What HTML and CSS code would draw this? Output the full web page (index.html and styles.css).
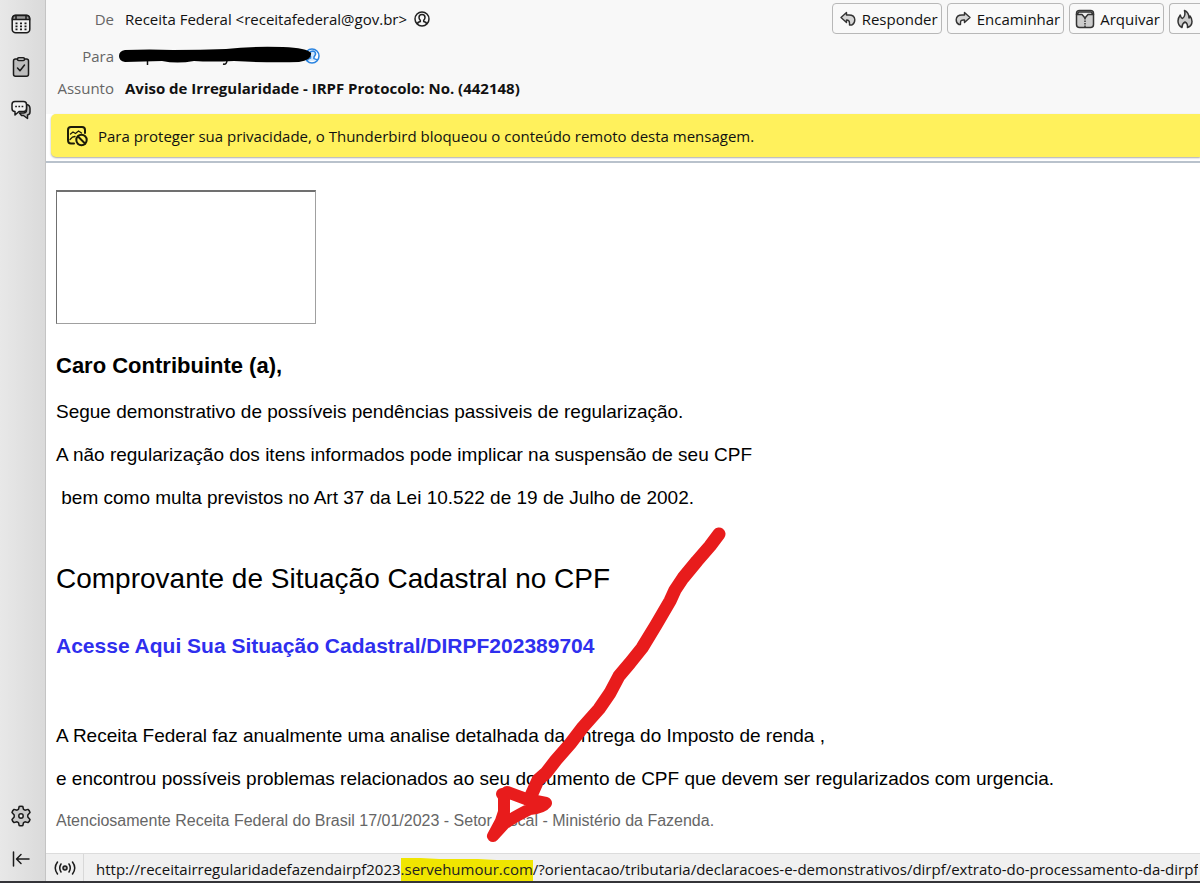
FILE: index.html
```html
<!DOCTYPE html>
<html lang="pt-BR">
<head>
<meta charset="utf-8">
<meta name="viewport" content="width=device-width, initial-scale=1">
<title>Aviso de Irregularidade - IRPF</title>
<link rel="stylesheet" href="styles.css">
</head>
<body>
<div class="app">
  <nav class="rail" aria-label="Espaços">
    <div class="rail-group">
      <button class="rail-button" type="button" aria-label="Agenda">
        <svg width="20" height="20" viewBox="0 0 20 20" fill="none" stroke="#1b1b1b" stroke-width="1.5"><rect x="1.2" y="1.2" width="17.600" height="17.600" rx="3.500" fill="#f0f0f0"/><path d="M1.500 4.500Q1.500 1.500 4.500 1.500H15.500Q18.500 1.500 18.500 4.500V5.500H1.500Z" fill="#999"/><path d="M5 1V6M15 1V6"/><path d="M4.500 9.300h11M4.500 12.300h11M4.500 15.300h11" stroke-dasharray="2 2.500" stroke-width="1.700"/></svg>
      </button>
      <button class="rail-button" type="button" aria-label="Tarefas">
        <svg width="20" height="20" viewBox="0 0 20 20" fill="none" stroke="#1b1b1b" stroke-width="1.5" stroke-linecap="round" stroke-linejoin="round"><rect x="2.500" y="2" width="15" height="17.200" rx="2" fill="#bdbdbd"/><rect x="6.500" y="0.800" width="7" height="2.700" rx="1.200" fill="#eee"/><path d="M6.500 11l2.500 2.800L13.500 8"/></svg>
      </button>
      <button class="rail-button" type="button" aria-label="Bate-papo">
        <svg width="20" height="20" viewBox="0 0 20 20" fill="none" stroke="#1b1b1b" stroke-width="1.5" stroke-linejoin="round"><path d="M15.500 4.500Q19 5 19 8.500V12Q19 14.500 16.500 15V18.500L12.500 15.500H10.500L8.500 13H12.500Q15.500 13 15.500 10Z" fill="#bbb"/><path d="M4 1.500H12.500Q15.500 1.500 15.500 4.500V8.500Q15.500 11.500 12.500 11.500H8L4 15V11.500Q1 11.500 1 8.500V4.500Q1 1.500 4 1.500Z" fill="#f1f1f1"/><path d="M4.200 6.600h8.500" stroke-dasharray="1.700 1.500"/></svg>
      </button>
    </div>
    <div class="rail-group">
      <button class="rail-button" type="button" aria-label="Configurações">
        <svg width="22" height="22" viewBox="0 0 22 22" fill="#c9c9c9" stroke="#1b1b1b" stroke-width="1.5" stroke-linejoin="round"><path d="M9.200 1.500Q11 .8 12.800 1.500L13.500 4.300L15 5.200L18 4.400Q19.600 5.700 20 7.500L17.800 10V12L20 14.500Q19.600 16.300 18 17.600L15 16.800L13.500 17.700L12.800 20.500Q11 21.200 9.200 20.500L8.500 17.700L7 16.800L4 17.600Q2.400 16.300 2 14.500L4.200 12V10L2 7.500Q2.400 5.700 4 4.400L7 5.200L8.500 4.300Z"/><circle cx="11" cy="11" r="2.200" fill="#eee"/></svg>
      </button>
      <button class="rail-button" type="button" aria-label="Recolher">
        <svg width="18" height="18" viewBox="0 0 18 18" fill="none" stroke="#1b1b1b" stroke-width="1.500" stroke-linecap="round" stroke-linejoin="round"><path d="M1.500 2V16M17 9H5M9 4.500L4.500 9L9 13.500"/></svg>
      </button>
    </div>
  </nav>

  <main class="pane">
    <header class="head">
      <dl class="fields">
        <dt>De</dt>
        <dd>Receita Federal &lt;receitafederal@gov.br&gt;
          <svg class="person" width="16" height="16" viewBox="0 0 16 16" fill="none" stroke="#222" stroke-width="1.500"><circle cx="8" cy="8" r="7"/><path d="M3.500 13Q3.500 11 6.300 10.500V9.300Q5 8 5 6.500Q5 3.500 8 3.500T11 6.500Q11 8 9.700 9.300V10.500Q12.500 11 12.500 13"/></svg>
        </dd>
        <dt>Para</dt>
        <dd>
          <svg class="redacted" width="204" height="22" viewBox="0 0 204 22" aria-label="Destinatário oculto"><g fill="#fff" stroke="#2b84e0" stroke-width="1.500"><circle cx="193" cy="11" r="7"/><path d="M188 16Q189 13.500 191.500 13V11.500Q190 10 190.500 8Q191.500 6 194 6Q197 6.500 196.500 9.500L195 12V13.500Q197.500 14 198 15.500" fill="#cfe6fb"/></g><path d="M28.500 15v5M104 19q4 1 4-4" fill="none" stroke="#111" stroke-width="1.500"/><path d="M6 5Q31 4 54 5Q82 5 107 4Q132 1 164 2Q188 3 192 8Q193 15 180 17Q152 18 115 16Q92 17 75 16Q58 19 43 16L6 17Q0 16 0 11T6 5Z"/></svg>
        </dd>
        <dt>Assunto</dt>
        <dd class="subject">Aviso de Irregularidade - IRPF Protocolo: No. (442148)</dd>
      </dl>
      <div class="toolbar">
        <button class="tool" type="button"><svg width="16" height="16" viewBox="0 0 16 16" fill="#d5d5d5" stroke="#333" stroke-width="1.400" stroke-linejoin="round"><path d="M6.500 1.500L1 6.500L6.500 11.500V9Q9.500 9 9.500 12V14H12Q15 12 14.800 8.500Q14.500 4 9 4H6.500Z"/></svg>Responder</button>
        <button class="tool" type="button"><svg width="16" height="16" viewBox="0 0 16 16" fill="#d5d5d5" stroke="#333" stroke-width="1.400" stroke-linejoin="round"><path d="M9.500 1.500L15 6.500L9.500 11.500V9Q5.500 8.500 5.500 11.500V13.500H4Q1 12 1.200 8.500Q1.500 4 7 4H9.500Z"/></svg>Encaminhar</button>
        <button class="tool tool-archive" type="button"><svg width="20" height="20" viewBox="0 0 20 20" fill="#ccc" stroke="#333" stroke-width="1.500" stroke-linejoin="round"><rect x="1.500" y="1.500" width="17" height="17" rx="3"/><path d="M1.500 5.500L4 3H16L18.500 5.500H13L10 9L7 5.500Z" fill="#eee"/><path d="M10 9V18" stroke-dasharray="1.500 1"/></svg>Arquivar</button>
        <button class="tool tool-cut" type="button" aria-label="Spam"><svg width="16" height="20" viewBox="0 0 16 20" fill="#ccc" stroke="#333" stroke-width="1.500" stroke-linejoin="round"><path d="M5 18.500Q1 16.500 1 12Q1 9 3.300 6Q3.800 9 5.500 9.500Q9 7 7.500 1.500Q12 3.500 12 9Q13 8.500 13 7Q15 9.500 15 12.500Q15 17 10.500 18.500Q11 14.500 8 13Q5 14.500 5 18.500Z"/></svg></button>
      </div>
    </header>

    <div class="notice" role="status">
      <svg width="22" height="22" viewBox="0 0 22 22" fill="none" stroke="#1c1b08" stroke-width="2" stroke-linecap="round"><path d="M19 8V5Q19 2 16 2H5Q2 2 2 5V15Q2 18.500 5 18.500H8"/><path d="M4.500 9L7 7L9.500 8.500L12.500 6L15.500 8M4 14.500L6.500 12L9 11.500" stroke-width="1.300"/><circle cx="15.500" cy="15" r="5.200"/><path d="M12 11.500L19 18.500"/></svg>
      <span>Para proteger sua privacidade, o Thunderbird bloqueou o conteúdo remoto desta mensagem.</span>
    </div>

    <article class="message">
      <div class="blocked-image"></div>
      <h2 class="greeting">Caro Contribuinte (a),</h2>
      <p>Segue demonstrativo de possíveis pendências passiveis de regularização.</p>
      <p>A não regularização dos itens informados pode implicar na suspensão de seu CPF</p>
      <p>&nbsp;bem como multa previstos no Art 37 da Lei 10.522 de 19 de Julho de 2002.</p>
      <h1 class="title">Comprovante de Situação Cadastral no CPF</h1>
      <a class="access" href="#">Acesse Aqui Sua Situação Cadastral/DIRPF202389704</a>
      <p>A Receita Federal faz anualmente uma analise detalhada da entrega do Imposto de renda ,</p>
      <p>e encontrou possíveis problemas relacionados ao seu documento de CPF que devem ser regularizados com urgencia.</p>
      <p class="signature">Atenciosamente Receita Federal do Brasil 17/01/2023 - Setor Fiscal - Ministério da Fazenda.</p>
      <svg class="arrow" width="250" height="325" viewBox="480 520 250 325" fill="none" stroke="#e81c1c" stroke-width="12" stroke-linecap="round" stroke-linejoin="round" aria-hidden="true"><path d="M719 534L710 546L697 561L683 578L675 590L670 601L656 625L642 648L630 663L619 676L610 693L599 709L583 727L570 744L556 760L546 773L538 780L530 798" stroke-width="13"/><path d="M507 792L526 799L546 803Q542 808 530 809Q512 818 504 824L493 836L501 821L504 812V796L502 794"/></svg>
    </article>

    <footer class="status">
      <span class="signal"><svg width="22" height="16" viewBox="0 0 22 16" fill="none" stroke="#1b1b1b" stroke-width="1.500" stroke-linecap="round"><circle cx="11" cy="8" r="2" fill="#aaa"/><path d="M7 4Q4.500 8 7 12M15 4Q17.500 8 15 12M3.500 2Q-1 8 3.500 14M18.500 2Q23 8 18.500 14"/></svg></span>
      <span class="url">http://receitairregularidadefazendairpf2023<mark>.servehumour.com</mark>/?orientacao/tributaria/declaracoes-e-demonstrativos/dirpf/extrato-do-processamento-da-dirpf</span>
    </footer>
  </main>
</div>
</body>
</html>
```
FILE: styles.css
```css
* { box-sizing: border-box; }

body {
  margin: 0;
  background: #fff;
  color: #111;
  font: 15px/20px "Open Sans", "Noto Sans", sans-serif;
  overflow-x: hidden;
}

button { font: inherit; color: inherit; }

.app {
  display: grid;
  grid-template-columns: 46px minmax(0, 1fr);
  min-height: calc(100vh - 3px);
  border-bottom: 2px solid #343438;
}

.rail {
  display: flex;
  flex-direction: column;
  justify-content: space-between;
  padding: 2px 4px 1px 0;
  border-right: 1px solid #c4c4c4;
  background: linear-gradient(90deg, #e8e8e8, #dadada);
}

.rail-group { display: flex; flex-direction: column; }

.rail-button {
  display: grid;
  place-items: center;
  height: 43px;
  padding: 0;
  border: 0;
  background: none;
}

.pane { display: flex; flex-direction: column; min-width: 0; }

.head {
  display: flex;
  justify-content: space-between;
  align-items: flex-start;
  height: 114px;
  padding-top: 3px;
  background: #f8f8f8;
}

.fields {
  display: grid;
  grid-template-columns: 68px auto;
  grid-template-rows: 32px 42px 22px;
  column-gap: 11px;
  align-items: center;
  margin: 0;
}

.fields dt { color: #666; text-align: right; }
.fields dd { display: flex; align-items: center; gap: 7px; margin: 0; white-space: nowrap; }
.subject { font-weight: 700; }
.redacted { margin-left: -6px; }

.toolbar { display: flex; gap: 5px; }

.tool {
  display: flex;
  align-items: center;
  gap: 6px;
  height: 31px;
  padding: 0 3px 0 7px;
  border: 1px solid #b8b8b8;
  border-radius: 4px;
  background: #f9f9f9;
  white-space: nowrap;
}

.tool-archive { padding-left: 5px; gap: 5px; }

.tool-cut {
  padding: 0 7px;
  border-right: 0;
  border-radius: 4px 0 0 4px;
}

.notice {
  display: flex;
  align-items: center;
  gap: 10px;
  height: 43px;
  margin-left: 5px;
  padding-left: 15px;
  border-radius: 5px 0 0 5px;
  background: #fff15c;
  box-shadow: 0 1px 2px #aaa;
}

.message {
  position: relative;
  flex: 1;
  margin-top: 4px;
  padding: 27px 10px 20px;
  border-top: 2px solid #b9c2cc;
  background: #fff;
  color: #000;
  font: 19px/24px "Liberation Sans", Arial, sans-serif;
}

.message p { margin: 0 0 19px; }

.blocked-image {
  width: 260px;
  height: 134px;
  border: 1px solid #a0a0a0;
  border-top: 2px solid #707070;
  border-left-color: #707070;
}

.greeting { margin: 28px 0 20px; font-size: 22px; line-height: 28px; }
.title { margin: 53px 0 37px; font-size: 28px; font-weight: 400; line-height: 32px; }

.access {
  display: block;
  margin-bottom: 64px;
  color: #2f2fee;
  font-size: 21px;
  font-weight: 700;
  line-height: 28px;
  text-decoration: none;
}

.message .signature { margin: 0; color: #666; font-size: 16px; line-height: 22px; }

.arrow { position: absolute; left: 434px; top: 357px; pointer-events: none; }

.status {
  display: flex;
  align-items: stretch;
  height: 28px;
  border-top: 1px solid #dcdcdc;
  background: #f0f0f0;
  line-height: 30px;
}

.signal {
  display: grid;
  place-items: center;
  flex: none;
  width: 38px;
  border-right: 1px solid #d8d8d8;
}

.url { padding-left: 12px; white-space: nowrap; overflow: hidden; }
.url mark { display: inline-block; background: linear-gradient(1deg, #f0e500 80%, transparent 81%); color: #222; }
```
